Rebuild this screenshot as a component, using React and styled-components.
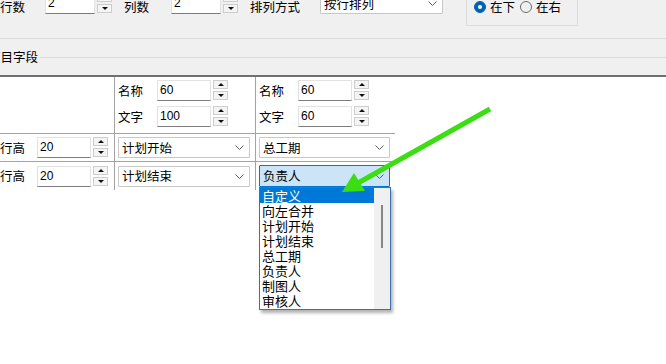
import React from 'react';
import styled, { createGlobalStyle } from 'styled-components';

const GlobalStyle = createGlobalStyle`
  html, body {
    margin: 0;
    padding: 0;
    background: #ffffff;
  }
  body {
    font-family: "Noto Sans CJK SC", "Noto Sans", sans-serif;
    font-size: 12.5px;
    color: #000;
  }
`;

const Window = styled.div`
  position: relative;
  width: 666px;
  height: 364px;
  overflow: hidden;
  display: flex;
  flex-direction: column;
  background: #ffffff;
`;

const TopPanel = styled.div`
  box-sizing: border-box;
  height: 39px;
  background: #f0f0f0;
  border-bottom: 1px solid #dadada;
  overflow: hidden;
`;

const ParamRow = styled.div`
  display: flex;
  align-items: flex-start;
  margin-top: -7px;
`;

const Label = styled.div`
  flex: none;
  width: ${p => p.$w}px;
  margin-top: ${p => p.$top || 0}px;
  margin-left: ${p => p.$gap || 0}px;
  font-size: 12.5px;
  line-height: 14px;
  white-space: nowrap;
`;

const SpinWrap = styled.div`
  display: flex;
  align-items: flex-start;
  gap: 2px;
  flex: none;
`;

const TextBox = styled.div`
  box-sizing: border-box;
  width: ${p => p.$w}px;
  height: 21px;
  background: #fff;
  border: 1px solid #e2e2e2;
  border-bottom-color: #7d7d7d;
  padding-left: 2px;
  font-family: "Liberation Sans", Arial, sans-serif;
  font-size: 12px;
  line-height: 19px;
`;

const SpinButtons = styled.div`
  display: flex;
  flex-direction: column;
  gap: 2px;
`;

const SpinBtn = styled.div`
  box-sizing: border-box;
  width: 15px;
  height: 9px;
  background: #f4f4f4;
  border: 1px solid #cdcdcd;
  display: flex;
  align-items: center;
  justify-content: center;

  &::after {
    content: '';
    width: 0;
    height: 0;
    border-left: 3px solid transparent;
    border-right: 3px solid transparent;
    ${p => (p.$up ? 'border-bottom: 3px solid #111;' : 'border-top: 3px solid #111;')}
  }
`;

const ComboBox = styled.div`
  position: relative;
  box-sizing: border-box;
  flex: none;
  width: ${p => p.$w}px;
  height: ${p => p.$h || 21}px;
  background: ${p => (p.$focused ? '#cce4f7' : '#ffffff')};
  border: 1px solid ${p => (p.$focused ? '#0078d7' : '#c8c8c8')};
  border-radius: 1px;
  display: flex;
  align-items: center;
  padding-left: 3px;
  font-size: 12.5px;
  line-height: 14px;
`;

const ComboText = styled.span`
  flex: 1;
  white-space: nowrap;
`;

const Chevron = styled.svg`
  flex: none;
  margin-right: 5px;
`;

const RadioGroup = styled.div`
  box-sizing: border-box;
  flex: none;
  margin-left: 23px;
  margin-top: -13px;
  width: 112px;
  height: 46px;
  border: 1px solid #dcdcdc;
  display: flex;
  align-items: flex-end;
  padding: 0 0 11px 7px;
`;

const RadioItem = styled.div`
  display: flex;
  align-items: center;
  gap: 4px;
  margin-right: 5px;
  font-size: 12.5px;
  line-height: 14px;
`;

const RadioDot = styled.span`
  box-sizing: border-box;
  width: 12px;
  height: 12px;
  border-radius: 50%;
  display: flex;
  align-items: center;
  justify-content: center;
  background: ${p => (p.$checked ? '#0063b1' : 'transparent')};
  border: 1px solid ${p => (p.$checked ? '#0063b1' : '#6b6b6b')};

  &::after {
    content: '';
    width: 4px;
    height: 4px;
    border-radius: 50%;
    background: ${p => (p.$checked ? '#ffffff' : 'transparent')};
  }
`;

const GroupHead = styled.div`
  height: 36px;
  background: #f0f0f0;
  display: flex;
  align-items: center;
`;

const Legend = styled.span`
  margin-left: -12px;
  font-size: 12.5px;
  line-height: 14px;
  white-space: nowrap;
`;

const Rule = styled.div`
  flex: 1;
  height: 1px;
  margin-left: 2px;
  background: #dadada;
`;

const Grid = styled.div`
  flex: 1;
  border-top: 2px solid #6f6f6f;
  background: #fff;
  display: grid;
  grid-template-columns: 114px 141px 140px;
  grid-template-rows: 57px 28px 28px;
  align-content: start;
`;

const Cell = styled.div`
  box-sizing: border-box;
  position: relative;
  border-left: ${p => (p.$first ? 'none' : '1px solid #a3a3a3')};
  border-bottom: ${p => (p.$last ? 'none' : '1px solid #a3a3a3')};
  padding-left: ${p => (p.$first ? 0 : 3)}px;
  display: flex;
  flex-direction: ${p => (p.$stack ? 'column' : 'row')};
  align-items: ${p => (p.$stack ? 'flex-start' : 'center')};
  padding-top: ${p => (p.$stack ? 3 : 0)}px;
  gap: ${p => (p.$stack ? 5 : 0)}px;
`;

const FieldLine = styled.div`
  display: flex;
  align-items: center;
`;

const DropList = styled.div`
  position: absolute;
  left: -1px;
  top: 21px;
  box-sizing: border-box;
  width: 132px;
  height: 123px;
  background: #fff;
  border: 1px solid #3f6fae;
  box-shadow: 2px 3px 3px rgba(0, 0, 0, 0.3);
  display: flex;
  z-index: 5;
`;

const Options = styled.div`
  flex: 1;
  display: flex;
  flex-direction: column;
`;

const Option = styled.div`
  height: 15px;
  padding-left: 2px;
  font-size: 13px;
  line-height: 15px;
  white-space: nowrap;
  background: ${p => (p.$active ? '#0078d7' : 'transparent')};
  color: ${p => (p.$active ? '#ffffff' : '#000000')};
`;

const ScrollTrack = styled.div`
  width: 16px;
  background: #f0f0f0;
  display: flex;
  justify-content: center;
  padding-top: 17px;
`;

const ScrollThumb = styled.div`
  width: 2px;
  height: 43px;
  background: #868686;
`;

const Overlay = styled.svg`
  position: absolute;
  left: 0;
  top: 0;
  pointer-events: none;
  z-index: 10;
`;

const ChevronIcon = () => (
  <Chevron width="9" height="5" viewBox="0 0 9 5">
    <polyline points="0.5,0.5 4.5,4.5 8.5,0.5" fill="none" stroke="#5a5a5a" strokeWidth="1" />
  </Chevron>
);

const Spin = ({ w, value }) => (
  <SpinWrap>
    <TextBox $w={w}>{value}</TextBox>
    <SpinButtons>
      <SpinBtn $up />
      <SpinBtn />
    </SpinButtons>
  </SpinWrap>
);

const Combo = ({ w, text, focused, children }) => (
  <ComboBox $w={w} $h={focused ? 22 : 21} $focused={focused}>
    <ComboText>{text}</ComboText>
    <ChevronIcon />
    {children}
  </ComboBox>
);

const options = ['自定义', '向左合并', '计划开始', '计划结束', '总工期', '负责人', '制图人', '审核人'];

export default function App() {
  return (
    <Window>
      <GlobalStyle />
      <TopPanel>
        <ParamRow>
          <Label $w={45} $top={7}>行数</Label>
          <Spin w={50} value="2" />
          <Label $w={47} $top={7} $gap={12}>列数</Label>
          <Spin w={50} value="2" />
          <Label $w={70} $top={7} $gap={12}>排列方式</Label>
          <Combo w={123} text="按行排列" />
          <RadioGroup>
            <RadioItem>
              <RadioDot $checked />
              在下
            </RadioItem>
            <RadioItem>
              <RadioDot />
              在右
            </RadioItem>
          </RadioGroup>
        </ParamRow>
      </TopPanel>

      <GroupHead>
        <Legend>项目字段</Legend>
        <Rule />
      </GroupHead>

      <Grid>
        <Cell $first />
        <Cell $stack>
          <FieldLine>
            <Label $w={39}>名称</Label>
            <Spin w={54} value="60" />
          </FieldLine>
          <FieldLine>
            <Label $w={39}>文字</Label>
            <Spin w={54} value="100" />
          </FieldLine>
        </Cell>
        <Cell $stack>
          <FieldLine>
            <Label $w={39}>名称</Label>
            <Spin w={54} value="60" />
          </FieldLine>
          <FieldLine>
            <Label $w={39}>文字</Label>
            <Spin w={54} value="60" />
          </FieldLine>
        </Cell>

        <Cell $first>
          <Label $w={37}>行高</Label>
          <Spin w={54} value="20" />
        </Cell>
        <Cell>
          <Combo w={132} text="计划开始" />
        </Cell>
        <Cell>
          <Combo w={131} text="总工期" />
        </Cell>

        <Cell $first $last>
          <Label $w={37}>行高</Label>
          <Spin w={54} value="20" />
        </Cell>
        <Cell $last>
          <Combo w={132} text="计划结束" />
        </Cell>
        <Cell $last>
          <Combo w={131} text="负责人" focused>
            <DropList>
              <Options>
                {options.map((o, i) => (
                  <Option key={o} $active={i === 0}>{o}</Option>
                ))}
              </Options>
              <ScrollTrack>
                <ScrollThumb />
              </ScrollTrack>
            </DropList>
          </Combo>
        </Cell>
      </Grid>

      <Overlay width="666" height="364" viewBox="0 0 666 364">
        <line x1="490" y1="109" x2="358" y2="183" stroke="#3ade12" strokeWidth="5" />
        <polygon points="342,192 354,173 365,191" fill="#3ade12" />
      </Overlay>
    </Window>
  );
}
